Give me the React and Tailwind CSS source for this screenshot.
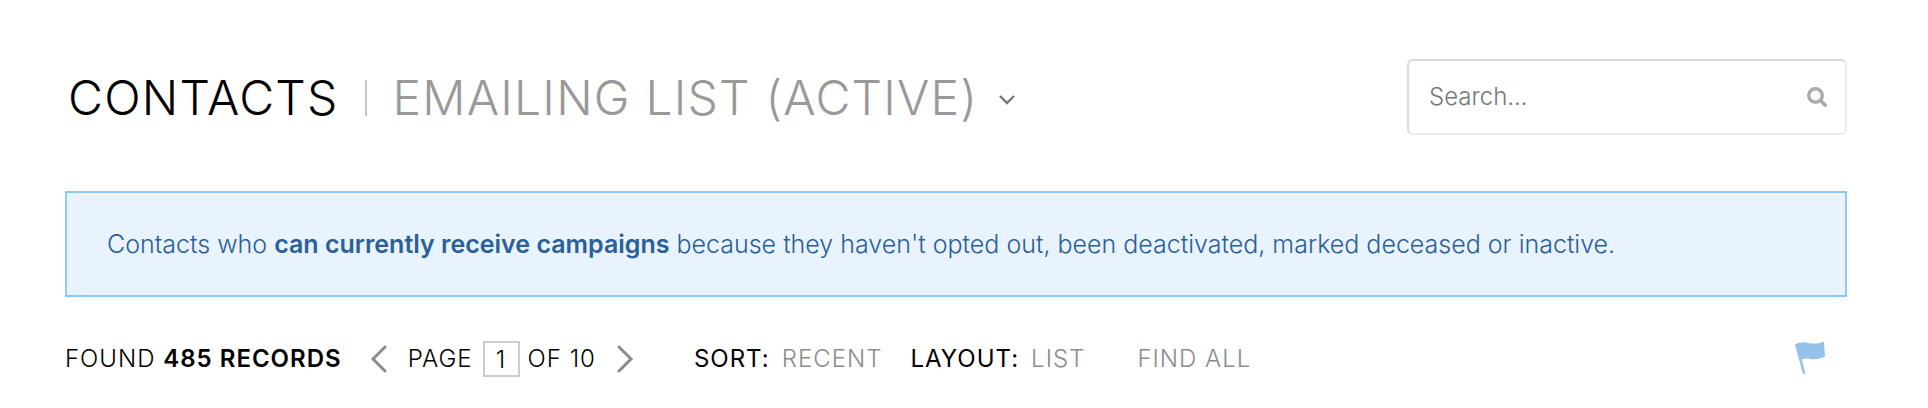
import { useState } from "react";
import clsx from "clsx";

function Chevron({ d, className }) {
  return (
    <svg
      viewBox="0 0 18 28"
      className={clsx("h-7 w-[18px]", className)}
      fill="none"
      stroke="#8c8c8c"
      strokeWidth="3"
      strokeLinecap="round"
      aria-hidden="true"
    >
      <path d={d} />
    </svg>
  );
}

function App() {
  const [search, setSearch] = useState("");
  const [page, setPage] = useState("1");

  const totalPages = 10;

  return (
    <div className="bg-white pt-[59px] pr-[81px] pb-6 pl-[65px] font-[Inter,sans-serif] text-2xl font-light text-black">
      {/* Title + search */}
      <header className="flex items-start justify-between gap-8">
        <h1 className="flex items-center pt-[9px] pl-[3px] text-5xl leading-[60px] font-light tracking-wide">
          CONTACTS
          <span className="mx-[26px] h-9 w-0.5 bg-[#c4c4c4]"></span>
          <button type="button" className="flex items-center gap-5 tracking-wide text-[#999]">
            EMAILING LIST (ACTIVE)
            <svg
              viewBox="0 0 18 12"
              className="mt-1 h-3 w-[18px]"
              fill="none"
              stroke="#777"
              strokeWidth="2.4"
              aria-hidden="true"
            >
              <path d="M2 2l7 7 7-7" />
            </svg>
          </button>
        </h1>

        <label className="flex h-19 w-[440px] items-center rounded-md border-2 border-t-[#dadada] border-r-[#ebebeb] border-b-[#ebebeb] border-l-[#dadada] pr-[18px] pl-5">
          <input
            type="text"
            aria-label="Search contacts"
            value={search}
            placeholder="Search..."
            className="min-w-0 flex-1 outline-none placeholder:text-[#777]"
            onChange={(e) => setSearch(e.target.value)}
          />
          <svg
            viewBox="0 0 20 20"
            className="size-5"
            fill="none"
            stroke="#aaa"
            aria-hidden="true"
          >
            <circle cx="8.5" cy="8.5" r="6.8" strokeWidth="3.4" />
            <path d="M13.5 13.5l4.8 4.8" strokeWidth="3.4" strokeLinecap="round" />
          </svg>
        </label>
      </header>

      {/* List description */}
      <p className="mt-14 border-2 border-[#8cc8fc] bg-[#e8f3fe] px-10 py-[33px] text-[25px] leading-9 text-[#2a6099]">
        Contacts who <strong className="font-semibold">can currently receive campaigns</strong>{" "}
        because they haven't opted out, been deactivated, marked deceased or inactive.
      </p>

      {/* Toolbar */}
      <div className="mt-11 flex h-9 items-center tracking-[1px]">
        <span>
          FOUND <strong className="font-semibold">485 RECORDS</strong>
        </span>

        <button type="button" aria-label="Previous page" className="ml-7">
          <Chevron d="M15 2L3 14l12 12" />
        </button>
        <label htmlFor="page" className="ml-5">
          PAGE
        </label>
        <input
          id="page"
          type="text"
          value={page}
          className="mr-2 ml-[10px] h-9 w-[37px] border-2 border-[#ccc] text-center outline-none"
          onChange={(e) => setPage(e.target.value)}
        />
        <span>OF {totalPages}</span>
        <button type="button" aria-label="Next page" className="ml-5">
          <Chevron d="M3 2l12 12L3 26" />
        </button>

        <span className="ml-[60px] font-normal">SORT:</span>
        <button type="button" className="ml-3 tracking-[1px] text-[#8c8c8c]">
          RECENT
        </button>
        <span className="ml-7 font-normal">LAYOUT:</span>
        <button type="button" className="ml-3 tracking-[1px] text-[#8c8c8c]">
          LIST
        </button>
        <a href="#all" className="ml-13 text-[#8c8c8c]">
          FIND ALL
        </a>

        <button type="button" aria-label="Flag" className="mr-5 ml-auto">
          <svg viewBox="0 0 32 36" className="h-9 w-8" fill="#94c2ea" aria-hidden="true">
            <path d="M0 3.500C4 1.200 8 .7 12 1.700c7 1.600 12 1 17-1.200L30 15.500c-5 2.500-10 3.300-15 2.400-3-.5-6-.5-8.300.4L10.500 32.500 8 33.200z" />
          </svg>
        </button>
      </div>
    </div>
  );
}

export default App;
